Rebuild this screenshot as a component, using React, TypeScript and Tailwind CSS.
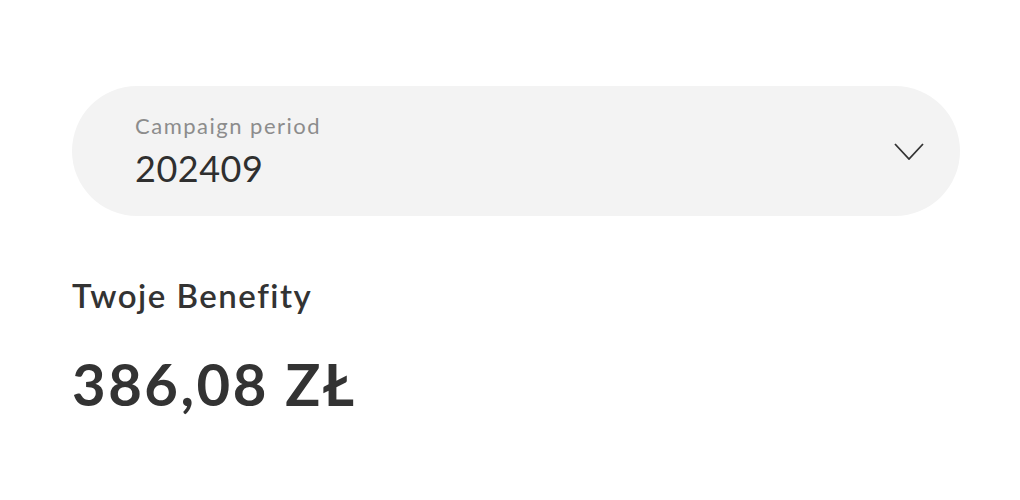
import React from 'react';

export default function App() {
  return (
    <div className="w-[1020px] h-[500px] bg-white" style={{ fontFamily: 'Lato, "Noto Sans", sans-serif' }}>
      <div className="pt-[86px] pl-[72px] pr-[60px]">
        <div className="h-[130px] rounded-full bg-[#f3f3f3] flex items-center justify-between pl-[63px] pr-[35px]">
          <div className="flex flex-col gap-[8px]">
            <span className="text-[22px] leading-[26px] tracking-[1.5px] text-[#8c8c8c]">Campaign period</span>
            <span className="text-[36px] leading-[42px] tracking-[0.5px] text-[#2f2f2f]">202409</span>
          </div>
          <svg width="32" height="18" viewBox="0 0 32 18" fill="none" stroke="#333" strokeWidth="1.8">
            <path d="M2 2l14 15L30 2" />
          </svg>
        </div>
        <h2 className="mt-[60px] text-[33px] leading-[38px] font-semibold tracking-[1.5px] text-[#333]">Twoje Benefity</h2>
        <div className="mt-[38px] text-[58px] leading-[64px] font-bold text-[#333] tracking-[2.5px]">386,08 ZŁ</div>
      </div>
    </div>
  );
}
